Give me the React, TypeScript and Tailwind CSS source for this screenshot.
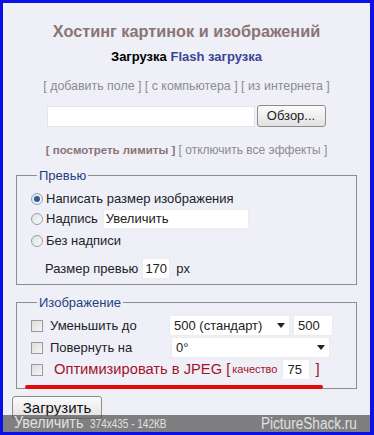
import React from "react";

const font = { fontFamily: "Arial, 'Liberation Sans', sans-serif" };

const Radio = ({ checked }: { checked?: boolean }) => (
  <span className="w-[12px] h-[12px] rounded-full border border-[#9aa0a8] bg-gradient-to-br from-[#dcdfe4] to-[#fafafa] flex items-center justify-center shrink-0">
    {checked && <span className="w-[6px] h-[6px] rounded-full bg-[#2a5d9a]" />}
  </span>
);

const Check = () => (
  <span className="w-[12px] h-[12px] border border-[#9a9a9a] bg-gradient-to-br from-[#dcdcdc] to-[#f6f6f6] shrink-0" />
);

const Arrow = () => (
  <svg width="8" height="5" viewBox="0 0 8 5" className="shrink-0">
    <path d="M0 0h8L4 5z" fill="#222" />
  </svg>
);

export default function App() {
  return (
    <div
      style={font}
      className="relative w-[374px] h-[435px] overflow-hidden bg-[#efeff8] border-l-[3px] border-t-[3px] border-r-[4px] border-b-[3px] border-[#0b10e4] text-[13px] text-[#222]"
    >
      <div className="flex flex-col items-center">
        <h1 className="mt-[18px] text-[16.3px] font-bold text-[#8a7474] leading-[20px]">
          Хостинг картинок и изображений
        </h1>
        <div className="mt-[8px] text-[13px] font-bold leading-[16px]">
          <span className="text-black">Загрузка</span>{" "}
          <span className="text-[#3b4596]">Flash загрузка</span>
        </div>
        <div className="mt-[13px] text-[12.4px] text-[#8c8c8c] leading-[16px]">
          [ добавить поле ] [ с компьютера ] [ из интернета ]
        </div>
        <div className="mt-[11px] flex items-center gap-[2px] ml-[-1px]">
          <div className="w-[208px] h-[21px] bg-white border border-[#e4e4ec]" />
          <button className="w-[69px] h-[22px] rounded-[3px] border border-[#8c8c8c] bg-gradient-to-b from-[#fbfbfb] to-[#e2e2e2] text-[13px] text-[#222]">
            Обзор...
          </button>
        </div>
        <div className="mt-[15px] text-[12px] text-[#8c8c8c] leading-[16px]">
          <span className="font-bold text-[11.5px] text-[#8a7474]">[ посмотреть лимиты ]</span> [ отключить все эффекты ]
        </div>
      </div>

      <fieldset className="mx-[13px] mt-[8px] border border-[#8e8e8e] pl-[14px] pb-[8px] h-[119px]">
        <legend className="ml-[6px] px-[2px] text-[#1f3f7f] text-[13px]">Превью</legend>
        <div className="flex items-center gap-[3px] mt-[5px] h-[17px]">
          <Radio checked />
          <span>Написать размер изображения</span>
        </div>
        <div className="flex items-center gap-[3px] h-[22px]">
          <Radio />
          <span>Надпись</span>
          <div className="ml-[2px] w-[146px] h-[20px] bg-white border border-[#ececf0] flex items-center px-[2px] text-[13px]">
            Увеличить
          </div>
        </div>
        <div className="flex items-center gap-[3px] h-[22px]">
          <Radio />
          <span>Без надписи</span>
        </div>
        <div className="flex items-center ml-[14px] mt-[6px] h-[22px]">
          <span>Размер превью</span>
          <div className="ml-[4px] w-[28px] h-[21px] bg-white border border-[#ececf0] flex items-center justify-center">
            170
          </div>
          <span className="ml-[6px]">px</span>
        </div>
      </fieldset>

      <fieldset className="mx-[13px] mt-[8px] border border-[#8e8e8e] pl-[14px] h-[96px]">
        <legend className="ml-[6px] px-[2px] text-[#1f3f7f] text-[13px]">Изображение</legend>
        <div className="flex items-center h-[22px] mt-[2px]">
          <Check />
          <span className="ml-[7px] w-[119px]">Уменьшить до</span>
          <div className="w-[121px] h-[21px] bg-white border border-[#ececf0] flex items-center justify-between px-[4px]">
            <span>500 (стандарт)</span>
            <Arrow />
          </div>
          <div className="ml-[3px] w-[40px] h-[21px] bg-white border border-[#ececf0] flex items-center px-[4px]">
            500
          </div>
        </div>
        <div className="flex items-center h-[22px]">
          <Check />
          <span className="ml-[7px] w-[121px]">Повернуть на</span>
          <div className="w-[159px] h-[21px] bg-white border border-[#ececf0] flex items-center justify-between px-[4px]">
            <span>0°</span>
            <Arrow />
          </div>
        </div>
        <div className="flex items-center h-[22px] text-[#a3132b]">
          <Check />
          <span className="ml-[11px] text-[14.7px]">Оптимизировать в JPEG [</span>
          <span className="ml-[2px] text-[11px]">качество</span>
          <div className="ml-[5px] w-[28px] h-[21px] bg-white border border-[#ececf0] flex items-center px-[4px] text-[#222]">
            75
          </div>
          <span className="ml-[5px] text-[15px]">]</span>
        </div>
        <div className="ml-[-6px] mt-[4px] w-[298px] h-[4px] rounded-full bg-[#e40a0a]" />
      </fieldset>

      <button className="ml-[9px] mt-[7px] w-[90px] h-[23px] rounded-[3px] border border-[#8c8c8c] bg-gradient-to-b from-[#fbfbfb] to-[#e2e2e2] text-[15px] text-[#111] leading-[18px]">
        Загрузить
      </button>

      <div className="absolute left-0 right-0 bottom-0 h-[17px] bg-[#5a5a5a]/75 flex items-center pl-[11px] pr-[13px] text-[#e0e0e0] whitespace-nowrap">
        <span className="w-[76px] shrink-0">
          <span className="inline-block text-[16px] leading-[17px] scale-x-[0.9] origin-left">Увеличить</span>
        </span>
        <span className="w-[90px] shrink-0">
          <span className="inline-block text-[13px] leading-[17px] scale-x-[0.77] origin-left">374x435 - 142КВ</span>
        </span>
        <span className="flex-1 flex justify-end">
          <span className="inline-block text-[16px] leading-[17px] scale-x-[0.85] origin-right">PictureShack.ru</span>
        </span>
      </div>
    </div>
  );
}
